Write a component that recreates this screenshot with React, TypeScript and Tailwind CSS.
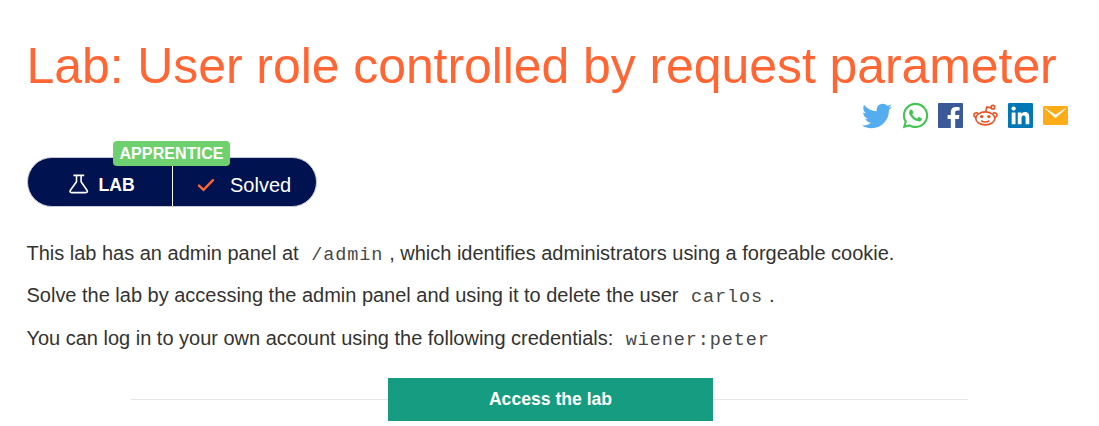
import React from "react";
import { FaTwitter, FaWhatsapp } from "react-icons/fa";

function FacebookIcon() {
  return (
    <svg viewBox="0 0 25 25" className="h-[25px] w-[25px]">
      <rect width="25" height="25" rx="0.8" fill="#3b5998" />
      <path
        d="M12.8 25V15.9H9.6V12H12.8V9.1C12.8 5.9 14.7 4 18 4C19.5 4 20.9 4.1 21.6 4.2V7.6H19.4C17.7 7.6 17.2 8.4 17.2 9.5V12H21.4L20.9 15.9H17.2V25Z"
        fill="#fff"
      />
    </svg>
  );
}

function RedditIcon() {
  return (
    <svg viewBox="0 0 25 22" className="-mt-px h-[22px] w-[25px]" fill="none" stroke="#ea5325" strokeWidth="1.6">
      <ellipse cx="12.3" cy="14.4" rx="9.5" ry="6.5" />
      <path d="M5 9.6C3.6 8.2 0.9 9.1 0.9 11.2C0.9 12.6 1.7 13.4 3 13.8" />
      <path d="M19.8 9.6C21.2 8.2 24.1 9.1 24 11.2C24 12.6 23.1 13.4 21.8 13.8" />
      <path d="M12.5 8L13.9 3L18.2 3.9" />
      <circle cx="19.9" cy="3.2" r="1.8" />
      <circle cx="8.7" cy="12.6" r="1.7" fill="#ea5325" stroke="none" />
      <circle cx="15.9" cy="12.6" r="1.7" fill="#ea5325" stroke="none" />
      <path d="M8.2 16.6C10.4 18.4 14.2 18.4 16.4 16.6" />
    </svg>
  );
}

function LinkedinIcon() {
  return (
    <svg viewBox="0 0 25 25" className="h-[25px] w-[25px]">
      <rect width="25" height="25" rx="1.3" fill="#0077b5" />
      <circle cx="5.6" cy="5.6" r="2.15" fill="#fff" />
      <path
        d="M3.7 9.4H7.5V21.3H3.7ZM9.8 9.4H13.4V11C14 9.9 15.3 9.1 17 9.1C20.5 9.1 21.3 11.4 21.3 14.7V21.3H17.6V15.4C17.6 13.9 17.5 12.4 15.7 12.4C13.9 12.4 13.5 13.8 13.5 15.3V21.3H9.8Z"
        fill="#fff"
      />
    </svg>
  );
}

function MailIcon() {
  return (
    <svg viewBox="0 0 25 19" className="h-[19px] w-[25px]">
      <rect width="25" height="19" rx="1.8" fill="#fcac16" />
      <path d="M2.4 2.7L12.5 11.7L22.6 2.7L12.5 9.1Z" fill="#fff" stroke="#fff" strokeWidth="0.8" />
    </svg>
  );
}

function FlaskIcon() {
  return (
    <svg viewBox="0 0 20 20" className="h-5 w-5" fill="none" stroke="#fff" strokeWidth="1.6" strokeLinejoin="round">
      <path d="M4.4 1.4H15.2M7.5 1.4V7.7L1.4 16.3C0.6 17.6 1.1 18.6 2.6 18.6H16.8C18.3 18.6 18.8 17.6 18 16.3L12.1 7.7V1.4" />
    </svg>
  );
}

function Code({ children }: { children: React.ReactNode }) {
  return (
    <code className="ml-[7px] mr-[6px] font-['Liberation_Mono',monospace] text-[18.5px] leading-none tracking-[0.9px] text-[#484848]">
      {children}
    </code>
  );
}

export default function App() {
  return (
    <main className="h-[426px] w-[1099px] overflow-hidden bg-white pl-[27px] font-['Liberation_Sans',Arial,sans-serif] text-[#333332]">
      <h1 className="-ml-[0.5px] whitespace-nowrap pt-[36px] text-[50px] leading-[60px] tracking-[-0.08px] text-[#ff6633]">
        Lab: User role controlled by request parameter
      </h1>

      <div className="mt-[6px] flex h-[27px] items-center justify-end pr-[31px]">
        <div className="flex items-center gap-[10px]">
          <FaTwitter className="-mr-px h-[30px] w-[30px] text-[#55acee]" />
          <FaWhatsapp className="-mr-[2px] h-[29px] w-[29px] text-[#43c553]" />
          <FacebookIcon />
          <RedditIcon />
          <LinkedinIcon />
          <MailIcon />
        </div>
      </div>

      <div className="relative mt-[28px] flex h-[50px] w-[290px] rounded-full border border-[#c8cad8] bg-[#00124f] text-white">
        <div className="flex w-[145px] items-center border-r border-white pl-[41px] pt-[4px]">
          <FlaskIcon />
          <span className="ml-[9.5px] mt-[2px] text-[17.6px] font-bold">LAB</span>
        </div>
        <div className="flex items-center pl-[24px] pt-[5px]">
          <svg viewBox="0 0 18 14" className="h-[14px] w-[18px]" fill="none" stroke="#ff6633" strokeWidth="2.4" strokeLinecap="round">
            <path d="M2 7.6L6.5 11.8L16 2.2" />
          </svg>
          <span className="ml-[15px] text-[20px]">Solved</span>
        </div>
        <span className="absolute -top-[17px] left-[85px] flex h-[25px] w-[117px] items-center justify-center rounded-[4px] bg-[#6fd06f] text-[16px] font-bold tracking-[0.1px]">
          APPRENTICE
        </span>
      </div>

      <div className="-ml-[0.5px] mt-[31px] whitespace-nowrap text-[20px] leading-[30px] tracking-[-0.01px]">
        <p className="mb-[12px]">
          This lab has an admin panel at <Code>/admin</Code>, which identifies administrators using a forgeable cookie.
        </p>
        <p className="mb-[13px]">
          Solve the lab by accessing the admin panel and using it to delete the user <Code>carlos</Code>.
        </p>
        <p>
          You can log in to your own account using the following credentials: <Code>wiener:peter</Code>
        </p>
      </div>

      <div className="ml-[104px] mt-[25px] flex w-[837px] items-center">
        <div className="mb-px h-px w-[257px] bg-[#e5e5e5]" />
        <button className="h-[43px] w-[325px] bg-[#169c80] text-[17.6px] font-bold text-white">Access the lab</button>
        <div className="mb-px h-px flex-1 bg-[#e5e5e5]" />
      </div>
    </main>
  );
}
